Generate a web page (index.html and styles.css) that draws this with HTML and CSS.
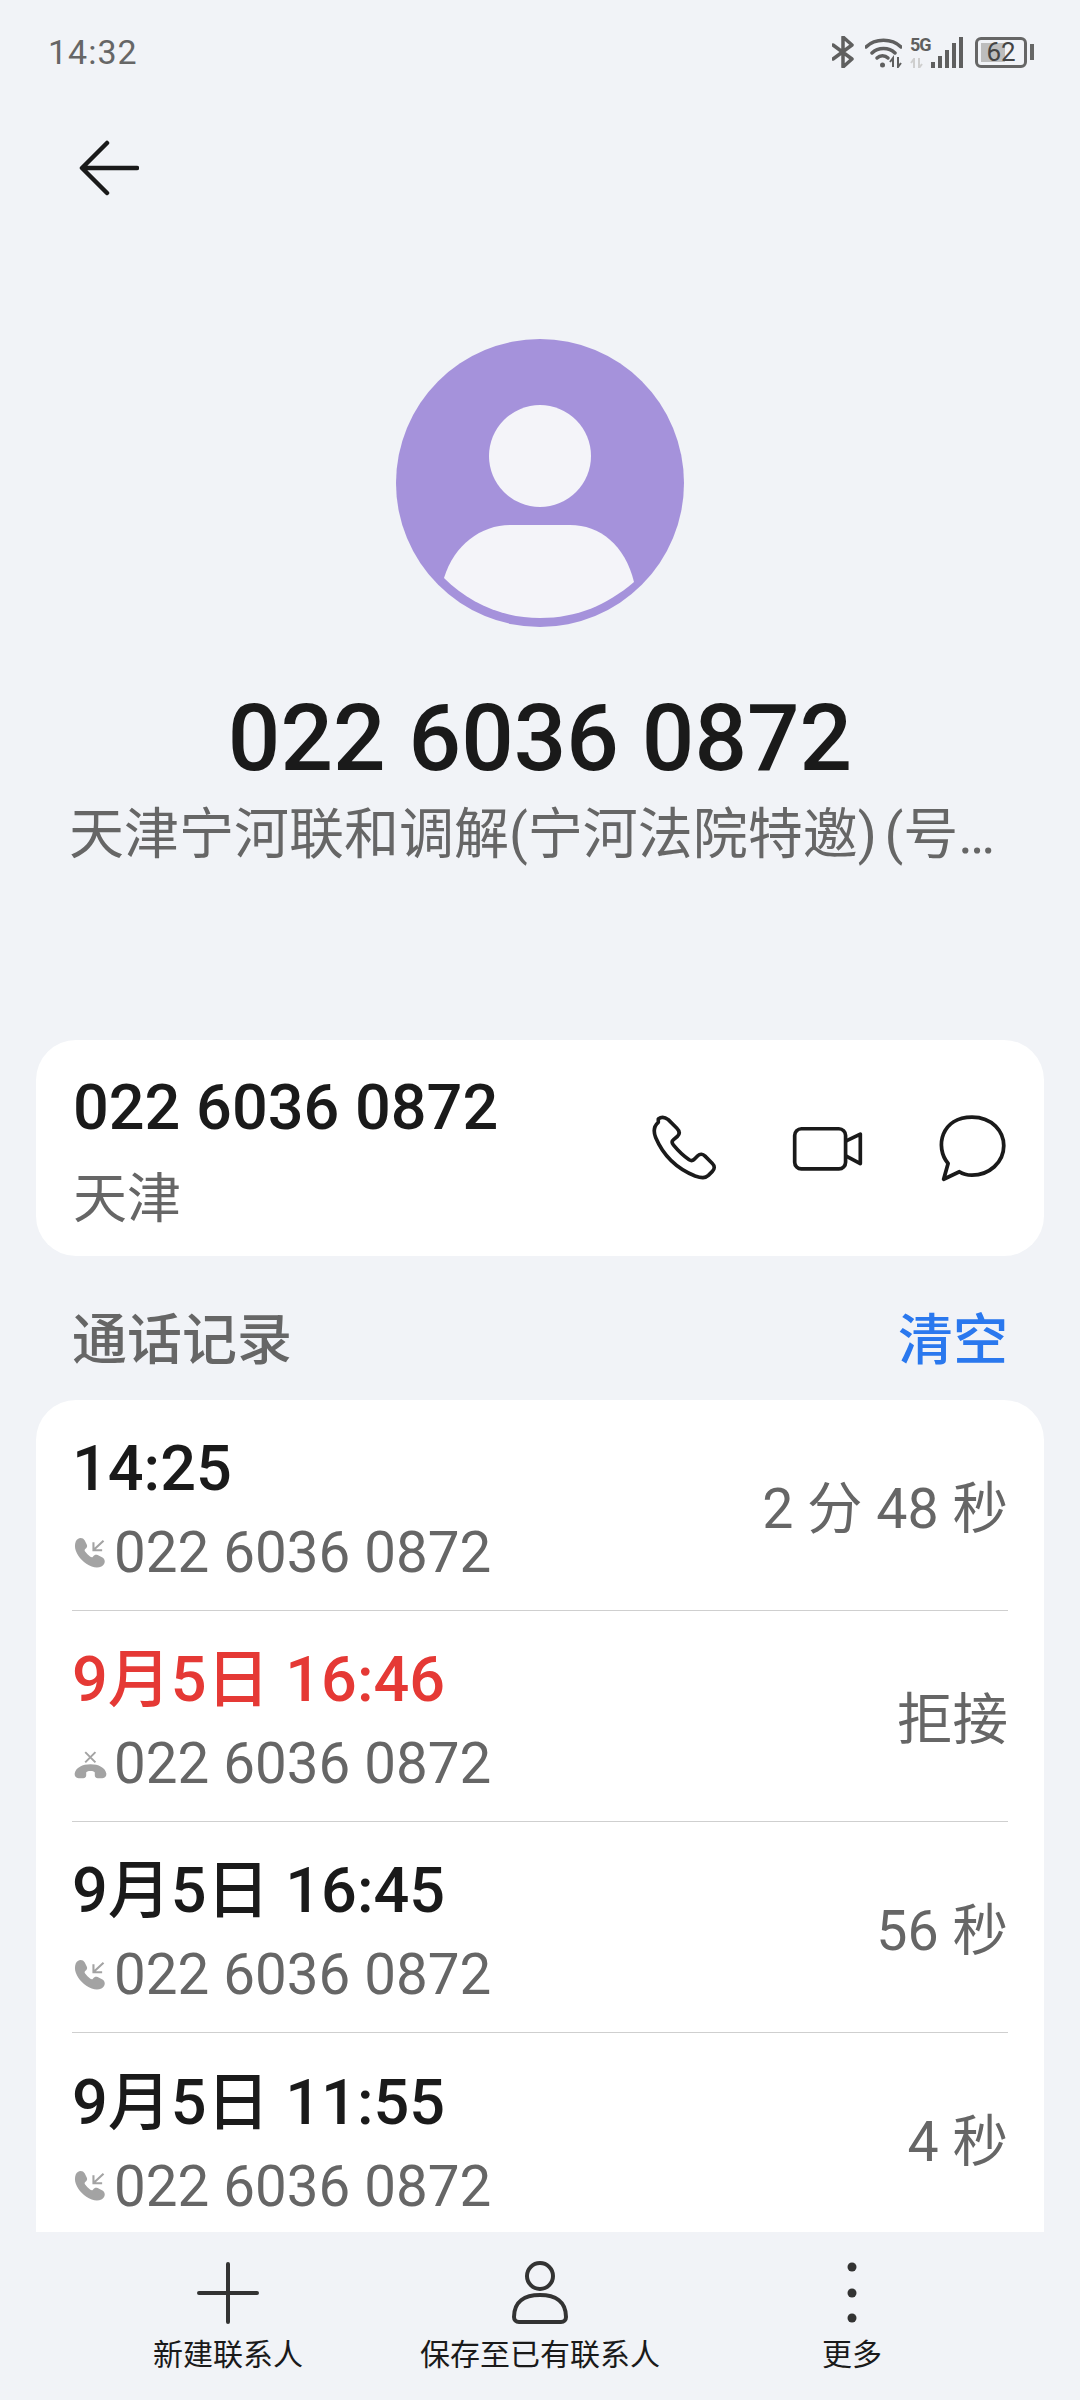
FILE: index.html
```html
<!DOCTYPE html>
<html lang="zh-CN">
<head>
    <meta charset="UTF-8">
    <meta name="viewport" content="width=device-width, initial-scale=1.0">
    <title>022 6036 0872</title>
    <link rel="stylesheet" href="styles.css">
</head>
<body>
    <svg class="defs" width="0" height="0">
        <symbol id="incoming" viewBox="75 105 95 95">
            <path d="M80 118c5-12 20-14 26-3l6 12c2 5 0 9-4 12-3 2-3 5-1 8 4 6 9 11 15 15 3 2 6 2 8-1 3-4 8-6 13-4l14 7c10 6 8 20-3 26-8 4-18 4-28 0-22-9-38-25-46-46-3-9-3-18 0-26z" fill="#a3a3a3"/>
            <path d="M160 116l-28 26M131 120v23h25" fill="none" stroke="#a3a3a3" stroke-width="6"/>
        </symbol>
        <symbol id="rejected" viewBox="70 740 100 95">
            <path d="M72 815c3-18 24-28 48-28s45 10 48 28c1 8-4 14-12 14h-14c-6 0-9-4-9-9v-8c0-3-6-5-13-5s-13 2-13 5v8c0 5-3 9-9 9H84c-8 0-13-6-12-14z" fill="#a3a3a3"/>
            <path d="M104 750l31 31M135 750l-31 31" fill="none" stroke="#a3a3a3" stroke-width="6"/>
        </symbol>
    </svg>

    <div class="status-bar">
        <span class="clock">14:32</span>
        <div class="status-icons">
            <svg class="ic-bt" viewBox="0 0 22 32"><path d="M1 9l19 14-9 8V1l9 8L1 23" fill="none" stroke="#5f5f5f" stroke-width="3.500" stroke-linecap="round" stroke-linejoin="round"/></svg>
            <svg class="ic-wifi" viewBox="0 0 37 32"><path d="M1 11c9-9 26-9 35 0M7 17c6-6 17-6 23 0" fill="none" stroke="#5f5f5f" stroke-width="3.500" stroke-linecap="round"/><path d="M12 22c3-3 8-3 11 0" fill="none" stroke="#5f5f5f" stroke-width="3.500" stroke-linecap="round"/><circle cx="17.500" cy="29" r="2.500" fill="#5f5f5f"/><path d="M25 26l3-4v9M33 21v10l3-4" fill="none" stroke="#5f5f5f" stroke-width="2"/></svg>
            <div class="signal">
                <div class="net-col">
                    <span class="net">5G</span>
                    <svg class="net-arrows" viewBox="0 0 14 10"><path d="M1 5l3-4v9M9 0v10l3-4" fill="none" stroke="#cfcfcf" stroke-width="2"/></svg>
                </div>
                <div class="bars">
                    <span class="bar bar-1"></span>
                    <span class="bar bar-2"></span>
                    <span class="bar bar-3"></span>
                    <span class="bar bar-4"></span>
                    <span class="bar bar-5"></span>
                </div>
            </div>
            <div class="battery-wrap">
                <div class="battery">
                    <span class="battery-fill"></span>
                    <span class="battery-text">62</span>
                </div>
                <span class="battery-nub"></span>
            </div>
        </div>
    </div>

    <div class="nav">
        <svg class="back" viewBox="0 0 60 56"><path d="M28 3L3 28l25 25M4 28h54" fill="none" stroke="#1a1a1a" stroke-width="4.500" stroke-linecap="round" stroke-linejoin="round"/></svg>
    </div>

    <div class="profile">
        <svg class="avatar" viewBox="0 0 288 288">
            <circle cx="144" cy="144" r="144" fill="#a592db"/>
            <circle cx="144" cy="117" r="51" fill="#f4f4f9"/>
            <path d="M48 239c10-33 37-53 66-53h60c30 0 55 20 64 57-27 23-57 36-94 36-36 0-70-14-96-40z" fill="#f4f4f9"/>
        </svg>
        <h1 class="name">022 6036 0872</h1>
        <p class="sub">天津宁河联和调解(宁河法院特邀) (号…</p>
    </div>

    <div class="card number-card">
        <div class="number-info">
            <div class="number">022 6036 0872</div>
            <div class="place">天津</div>
        </div>
        <div class="actions">
            <svg class="ic-phone" viewBox="90 100 205 205"><path d="M112 115c10-8 20-6 30 2l26 26c9 9 9 17 2 24l-12 10c-6 5-5 11 0 17 14 17 29 32 47 44 7 4 12 3 17-3l9-9c7-7 15-6 22 1l22 22c8 8 7 17 0 24l-12 12c-10 9-20 9-40 2-55-22-97-64-119-116-7-18-6-34 8-46z" fill="none" stroke="#1a1a1a" stroke-width="11" stroke-linejoin="round"/></svg>
            <svg class="ic-video" viewBox="515 133 218 140"><rect x="526" y="144" width="152" height="120" rx="20" fill="none" stroke="#1a1a1a" stroke-width="11"/><path d="M680 180l42-20v88l-42-22" fill="none" stroke="#1a1a1a" stroke-width="11" stroke-linejoin="round"/></svg>
            <svg class="ic-chat" viewBox="950 100 210 205"><path d="M985 248c-40-48-20-136 70-136 60 0 93 43 93 84 0 49-43 86-93 86-13 0-25-2-37-10l-46 22z" fill="none" stroke="#1a1a1a" stroke-width="11" stroke-linejoin="round"/></svg>
        </div>
    </div>

    <div class="log-head">
        <span class="log-title">通话记录</span>
        <span class="log-clear">清空</span>
    </div>

    <div class="card log-card">
        <div class="row">
            <div class="row-main">
                <div class="row-time">14:25</div>
                <div class="row-number"><svg class="call-ic"><use href="#incoming"/></svg>022 6036 0872</div>
            </div>
            <div class="row-side">2 分 48 秒</div>
        </div>
        <div class="row">
            <div class="row-main">
                <div class="row-time missed">9月5日 16:46</div>
                <div class="row-number"><svg class="call-ic"><use href="#rejected"/></svg>022 6036 0872</div>
            </div>
            <div class="row-side">拒接</div>
        </div>
        <div class="row">
            <div class="row-main">
                <div class="row-time">9月5日 16:45</div>
                <div class="row-number"><svg class="call-ic"><use href="#incoming"/></svg>022 6036 0872</div>
            </div>
            <div class="row-side">56 秒</div>
        </div>
        <div class="row">
            <div class="row-main">
                <div class="row-time">9月5日 11:55</div>
                <div class="row-number"><svg class="call-ic"><use href="#incoming"/></svg>022 6036 0872</div>
            </div>
            <div class="row-side">4 秒</div>
        </div>
    </div>

    <div class="toolbar">
        <div class="tool">
            <svg class="tool-ic" viewBox="0 0 64 64"><path d="M32 3v58M3 32h58" fill="none" stroke="#333" stroke-width="4" stroke-linecap="round"/></svg>
            <span class="tool-label">新建联系人</span>
        </div>
        <div class="tool">
            <svg class="tool-ic" viewBox="0 0 64 64"><ellipse cx="32" cy="15" rx="13" ry="13" fill="none" stroke="#333" stroke-width="4"/><path d="M6 56c0-16 11-22 26-22s26 6 26 22c0 3-2 5-5 5H11c-3 0-5-2-5-5z" fill="none" stroke="#333" stroke-width="4"/></svg>
            <span class="tool-label">保存至已有联系人</span>
        </div>
        <div class="tool">
            <svg class="tool-ic" viewBox="0 0 64 64"><circle cx="32" cy="6" r="4.500" fill="#333"/><circle cx="32" cy="32" r="4.500" fill="#333"/><circle cx="32" cy="57" r="4.500" fill="#333"/></svg>
            <span class="tool-label">更多</span>
        </div>
    </div>
</body>
</html>
```

FILE: styles.css
```css
* {
    box-sizing: border-box;
}
body {
    font-family: Roboto, "Noto Sans CJK SC", sans-serif;
    display: flex;
    flex-direction: column;
    width: 1080px;
    height: 2400px;
    margin: 0;
    overflow: hidden;
    background-color: #f1f3f7;
    color: #1a1a1a;
}
.defs {
    position: absolute;
}
.status-bar {
    display: flex;
    justify-content: space-between;
    align-items: center;
    height: 104px;
    padding: 0 46px 0 48px;
}
.clock {
    font-size: 34px;
    letter-spacing: 1px;
    color: #666;
}
.status-icons {
    display: flex;
    align-items: center;
}
.ic-bt {
    width: 22px;
    height: 32px;
}
.ic-wifi {
    width: 37px;
    height: 32px;
    margin-left: 11px;
}
.signal {
    display: flex;
    align-items: flex-start;
    height: 31px;
    margin-left: 8px;
}
.net-col {
    display: flex;
    flex-direction: column;
    justify-content: space-between;
    width: 20px;
    height: 31px;
}
.net {
    font-size: 18px;
    font-weight: 700;
    line-height: 16px;
    letter-spacing: -1px;
    color: #5f5f5f;
}
.net-arrows {
    width: 14px;
    height: 10px;
}
.bars {
    display: flex;
    align-items: flex-end;
    gap: 3px;
    height: 31px;
    margin-left: 1px;
}
.bar {
    width: 4px;
    background-color: #5f5f5f;
}
.bar-1 {
    height: 6px;
}
.bar-2 {
    height: 12px;
}
.bar-3 {
    height: 18px;
}
.bar-4 {
    height: 25px;
}
.bar-5 {
    height: 31px;
}
.battery-wrap {
    display: flex;
    align-items: center;
    gap: 3px;
    margin-left: 12px;
}
.battery {
    position: relative;
    display: flex;
    align-items: center;
    justify-content: center;
    width: 52px;
    height: 31px;
    border: 3px solid #666;
    border-radius: 6px;
}
.battery-fill {
    position: absolute;
    left: 3px;
    top: 3px;
    bottom: 3px;
    width: 24px;
    background-color: #bdbdbd;
}
.battery-text {
    position: relative;
    font-size: 26px;
    line-height: 24px;
    color: #444;
}
.battery-nub {
    width: 4px;
    height: 16px;
    background-color: #666;
}
.nav {
    height: 235px;
    padding: 36px 0 0 79px;
}
.back {
    display: block;
    width: 60px;
    height: 56px;
}
.profile {
    display: flex;
    flex-direction: column;
    align-items: center;
    height: 701px;
}
.avatar {
    width: 288px;
    height: 288px;
}
.name {
    margin: 58px 0 0;
    font-size: 92.500px;
    font-weight: 500;
    line-height: 108px;
}
.sub {
    margin: 2px 16px 0 0;
    font-size: 55px;
    line-height: 78px;
    word-spacing: -6px;
    color: #666;
    white-space: nowrap;
}
.card {
    margin: 0 36px;
    background-color: #fff;
    border-radius: 40px;
}
.number-card {
    display: flex;
    justify-content: space-between;
    align-items: center;
    height: 216px;
    padding: 0 36px 0 37px;
}
.number-info {
    padding-top: 12px;
}
.number {
    font-size: 63px;
    font-weight: 500;
    line-height: 84px;
    margin-top: -5px;
}
.place {
    font-size: 54px;
    line-height: 76px;
    margin-top: 12px;
    color: #666;
}
.actions {
    display: flex;
    align-items: center;
    gap: 72px;
}
.ic-phone {
    width: 68px;
    height: 68px;
}
.ic-video {
    width: 73px;
    height: 47px;
}
.ic-chat {
    width: 72px;
    height: 70px;
}
.log-head {
    display: flex;
    justify-content: space-between;
    align-items: center;
    height: 144px;
    padding: 14px 36px 0 72px;
    margin-right: 36px;
    font-size: 55px;
}
.log-title {
    color: #666;
    font-weight: 500;
}
.log-clear {
    color: #2a78ee;
    font-weight: 500;
}
.log-card {
    flex: 1;
    min-height: 0;
    overflow: hidden;
    padding: 0 36px;
    border-radius: 40px 40px 0 0;
}
.row {
    display: flex;
    justify-content: space-between;
    align-items: center;
    height: 211px;
    border-bottom: 1px solid #cfcfcf;
}
.row:last-child {
    border-bottom: none;
}
.row-main {
    padding-top: 10px;
}
.row-time {
    font-size: 63px;
    font-weight: 500;
    line-height: 84px;
}
.missed {
    color: #e53935;
}
.row-number {
    display: flex;
    align-items: center;
    margin-top: 2px;
    font-size: 56.500px;
    line-height: 80px;
    color: #666;
}
.call-ic {
    width: 33px;
    height: 33px;
    margin: 0 7px 0 2px;
}
.row-side {
    margin-top: -3px;
    font-size: 55.500px;
    color: #666;
}
.toolbar {
    display: grid;
    grid-template-columns: repeat(3, 312px);
    height: 168px;
    padding: 29px 72px 0;
}
.tool {
    display: flex;
    flex-direction: column;
    align-items: center;
    white-space: nowrap;
}
.tool-ic {
    width: 64px;
    height: 64px;
}
.tool-label {
    margin-top: 8px;
    font-size: 30px;
    line-height: 44px;
    color: #1a1a1a;
}
```
